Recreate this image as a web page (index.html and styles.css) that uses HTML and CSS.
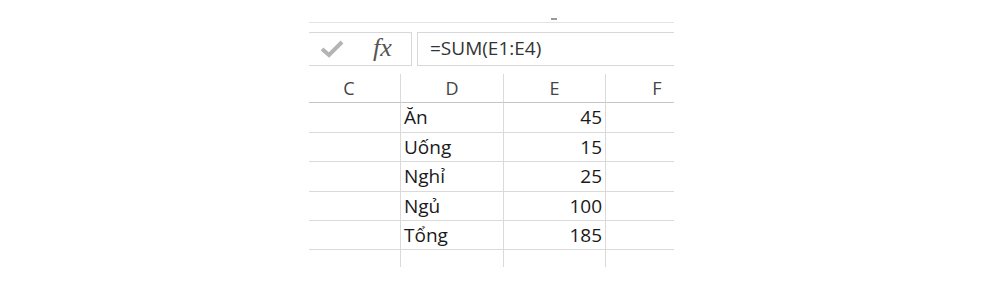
FILE: index.html
```html
<!DOCTYPE html>
<html lang="vi">
<head>
<meta charset="utf-8">
<link rel="stylesheet" href="styles.css">
</head>
<body>
<div class="sheet">
  <div class="ribbon"><span class="mark"></span></div>
  <div class="fbar">
    <div class="namebox">
      <svg class="check" width="24" height="18" viewBox="0 0 24 18"><path d="M2 9 L9 15 L22 2" fill="none" stroke="#b4b4b4" stroke-width="4"/></svg>
      <span class="fx">fx</span>
    </div>
    <div class="formula">=SUM(E1:E4)</div>
  </div>
  <div class="gridwrap">
    <div class="grid">
      <div class="hd">C</div><div class="hd">D</div><div class="hd">E</div><div class="hd last">F</div>
      <div class="c"></div><div class="c txt">Ăn</div><div class="c num">45</div><div class="c last"></div>
      <div class="c"></div><div class="c txt">Uống</div><div class="c num">15</div><div class="c last"></div>
      <div class="c"></div><div class="c txt">Nghỉ</div><div class="c num">25</div><div class="c last"></div>
      <div class="c"></div><div class="c txt">Ngủ</div><div class="c num">100</div><div class="c last"></div>
      <div class="c"></div><div class="c txt">Tổng</div><div class="c num">185</div><div class="c last"></div>
      <div class="e"></div><div class="e"></div><div class="e"></div><div class="e last"></div>
    </div>
  </div>
</div>
</body>
</html>
```
FILE: styles.css
```css
html, body { margin: 0; padding: 0; background: #fff; }
body { width: 997px; height: 285px; overflow: hidden; }
.sheet { margin-left: 309px; width: 365px; font-family: "Open Sans", "Noto Sans", sans-serif; color: #1a1a1a; }
.ribbon { height: 22px; border-bottom: 1px solid #e3e3e3; position: relative; }
.mark { position: absolute; left: 242px; top: 18px; width: 6px; height: 2px; background: #9a9a9a; }
.fbar { margin-top: 9px; display: flex; height: 34px; }
.namebox { width: 103px; box-sizing: border-box; border-top: 1px solid #d8d8d8; border-bottom: 1px solid #d8d8d8; border-right: 1px solid #d8d8d8; display: flex; align-items: center; }
.check { margin-left: 11px; }
.fx { margin-left: 29px; font-family: "Liberation Serif", serif; font-style: italic; font-size: 26px; color: #555; line-height: 1; margin-top: -2px; }
.formula { margin-left: 5px; flex: 1; box-sizing: border-box; border: 1px solid #d8d8d8; border-right: none; padding-left: 12px; font-size: 19px; line-height: 31px; color: #333; }
.gridwrap { margin-top: 8px; overflow: hidden; }
.grid { margin-left: -11px; display: grid; grid-template-columns: 103px 103px 102px 102px; grid-template-rows: 29px 30px 29px 30px 29px 29px 17px; }
.hd { border-right: 1px solid #dadada; border-bottom: 1px solid #c6c6c6; text-align: center; font-size: 18px; line-height: 28px; color: #444; }
.c { border-right: 1px solid #dadada; border-bottom: 1px solid #dadada; font-size: 19px; line-height: 28px; }
.e { border-right: 1px solid #dadada; }
.last { border-right: none; }
.txt { padding-left: 3px; }
.num { text-align: right; padding-right: 3px; }
```
